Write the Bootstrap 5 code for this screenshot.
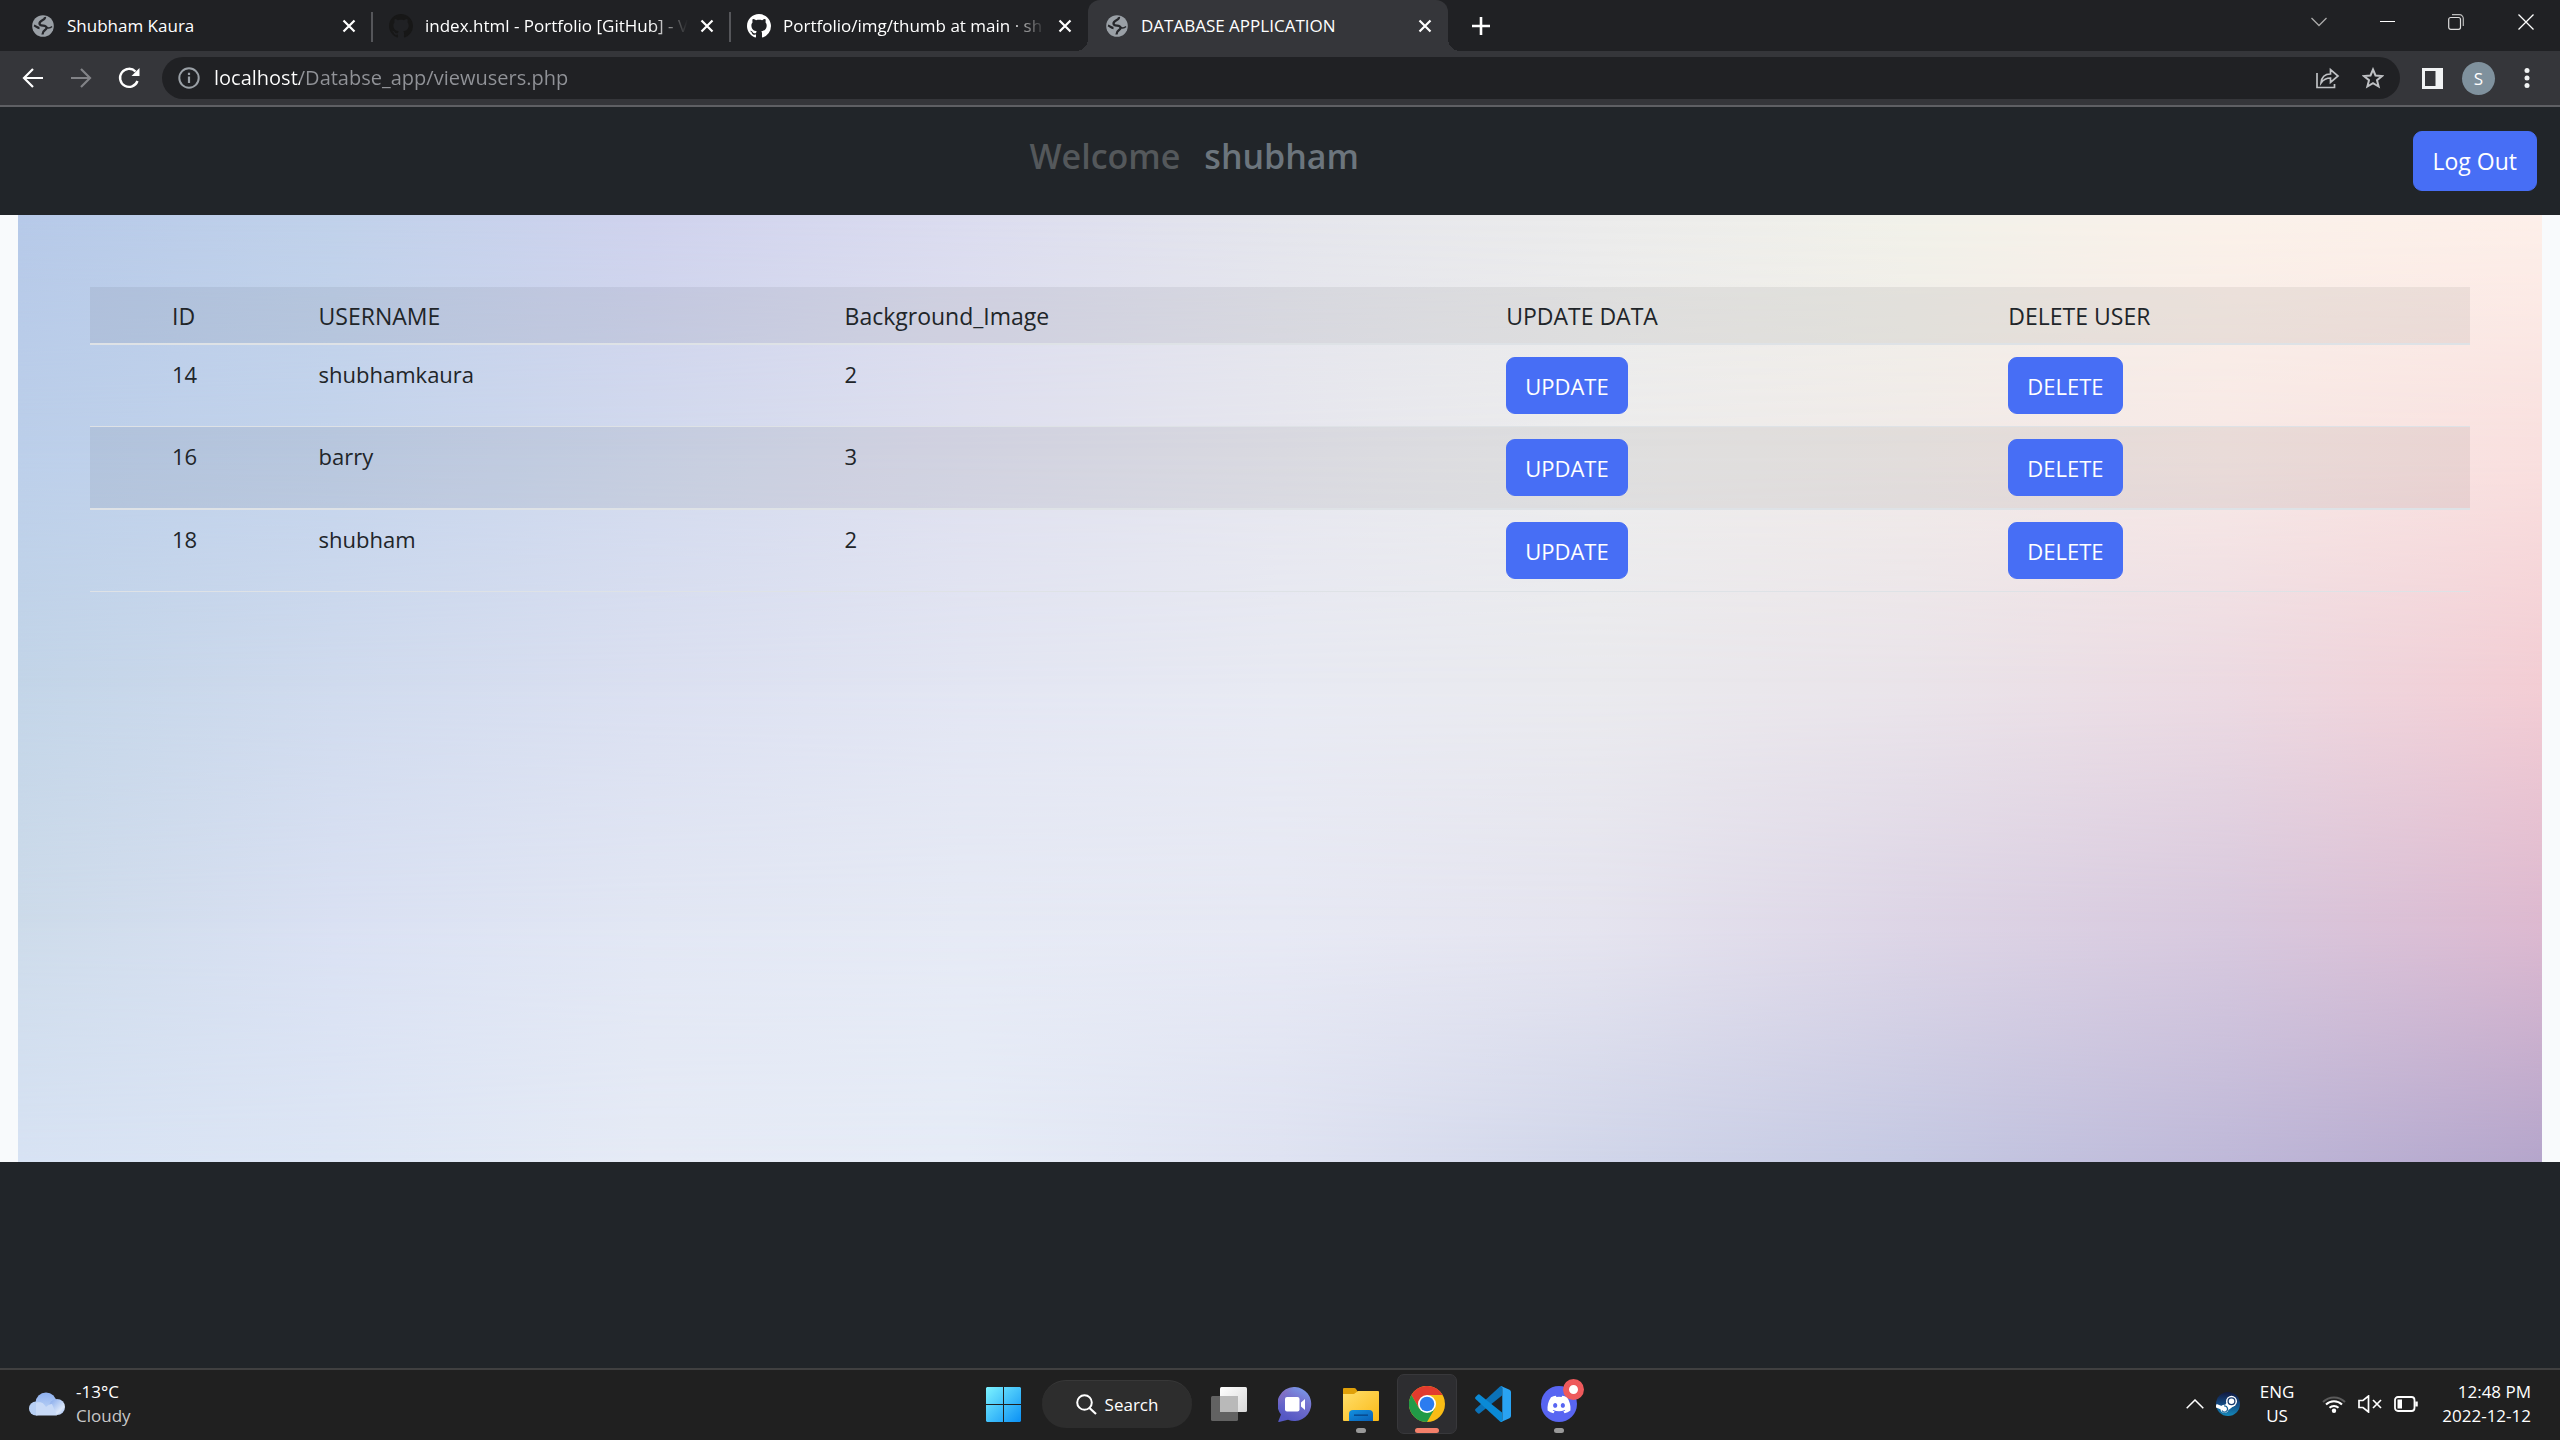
<!DOCTYPE html>
<html lang="en">
<head>
<meta charset="utf-8">
<meta name="viewport" content="width=device-width, initial-scale=1">
<title>DATABASE APPLICATION</title>
<link href="https://cdn.jsdelivr.net/npm/bootstrap@5.3.0/dist/css/bootstrap.min.css" rel="stylesheet">
<style>
  body { font-family: "Open Sans", "Noto Sans", sans-serif; background: #f8fafc; color: #212529; }
  svg { display: block; flex: none; }
  button { border: 0; background: none; color: inherit; padding: 0; }

  /* browser tabs */
  .tabstrip { background: #202124; color: #fff; height: 51px; padding-left: 14px; font-size: 17px; }
  .tab { width: 358px; padding: 0 16px 0 17px; gap: 12px; position: relative; }
  .tab a { color: inherit; text-decoration: none; min-width: 0; white-space: nowrap; }
  .tab a.long { -webkit-mask-image: linear-gradient(90deg, #000 86%, transparent); mask-image: linear-gradient(90deg, #000 86%, transparent); }
  .tab.divided::after { content: ""; position: absolute; right: -1px; top: 12px; width: 2px; height: 30px; background: #55565a; }
  .tab.current { width: 360px; background: #35363a; border-radius: 12px 12px 0 0; }
  .tab.current::before, .tab.current::after { content: ""; position: absolute; bottom: 0; width: 12px; height: 12px; }
  .tab.current::before { left: -12px; background: radial-gradient(circle at 0 0, transparent 12px, #35363a 12px); }
  .tab.current::after { right: -12px; background: radial-gradient(circle at 100% 0, transparent 12px, #35363a 12px); }
  .window-btns { gap: 45px; padding-right: 25px; height: 43px; }

  /* toolbar */
  .toolbar { background: #35363a; height: 56px; border-bottom: 2px solid #5f6064; padding: 0 24px 0 20px; }
  .nav-btns { gap: 22px; width: 142px; }
  .omnibox { background: #202124; height: 42px; border-radius: 21px; padding: 0 16px; gap: 14px; }
  .omnibox input { border: 0; outline: 0; padding: 0; font-size: 20px; line-height: 30px; color: transparent;
    background: linear-gradient(90deg, #fff 86px, #919398 86px); -webkit-background-clip: text; background-clip: text; }
  .tools { gap: 19px; padding-left: 22px; }
  .avatar { width: 33px; height: 33px; background: #7f919d; color: #fff; font-size: 17px; line-height: 33px; }

  /* application */
  .app-head { background: #212529; padding: 24px 23px 24px 24px; }
  .app-head h1 { font-size: 34px; line-height: 50px; font-weight: 600; color: #54585b; margin: 0 48px 0 0; gap: 24px; }
  .app-head h1 span + span { color: #6c757d; }
  .btn-app { --bs-btn-color: #fff; --bs-btn-bg: #476ef5; --bs-btn-border-color: #476ef5; --bs-btn-hover-color: #fff; --bs-btn-hover-bg: #3a60e6;
    --bs-btn-border-radius: 9px; --bs-btn-font-size: 22px; --bs-btn-line-height: 37px; padding: 10px 18px 8px; }
  .btn-logout { --bs-btn-line-height: 40px; --bs-btn-font-size: 23px; padding: 9px 19px; }
  .wallpaper { margin: 0 18px; padding: 72px; position: relative; }
  .wallpaper > svg { position: absolute; inset: 0; width: 100%; height: 100%; }
  .users { position: relative; --bs-table-bg: transparent; --bs-table-color: #212529; table-layout: fixed; border-collapse: separate; border-spacing: 0; font-size: 22px; line-height: 34px; margin: 0; }
  .users > :not(caption) > * > * { padding: 12px; border-bottom: 1px solid #dee2e6; box-shadow: none; background: none; font-weight: 400; vertical-align: top; }
  .users > thead { font-size: 23px; }
  .users > thead > tr > * { padding-bottom: 10px; border-bottom-width: 2px; }
  .users > tbody > tr:nth-child(even) > * { border-bottom-width: 2px; }
  .users > thead > tr, .users > tbody > tr:nth-child(even) { background: rgba(0, 0, 0, .06); }
  .users > :not(caption) > * > :first-child { padding-left: 82px; }
  .app-foot { background: #212529; height: 206px; }

  /* taskbar */
  .taskbar { background: #202020; border-top: 2px solid #404040; height: 72px; padding-bottom: 2px; color: #fff; font-size: 17px; line-height: 24px; }
  .taskbar > * { flex: 1 1 0; }
  .taskbar > .pinned { flex: none; padding-left: 2px; }
  .slot { width: 66px; height: 70px; position: relative; display: grid; place-items: center; }
  .slot.running::after { content: ""; position: absolute; bottom: 6px; left: 50%; margin-left: -5px; width: 10px; height: 5px; border-radius: 3px; background: #999; }
  .slot.active::before { content: ""; position: absolute; inset: 5px 3px; background: #2d2d30; border: 1px solid #38383b; border-radius: 7px; }
  .slot.active::after { width: 24px; margin-left: -12px; background: #f4806a; }
  .slot svg { position: relative; }
  .slot .ping { position: absolute; top: 10px; right: 8px; width: 21px; height: 21px; border: 6px solid #ee5a5c; background: #fff; border-radius: 50%; }
  .find { width: 150px; height: 48px; margin: 0 4px 0 6px; border-radius: 24px; background: #2d2d2d; border-top: 1px solid #383838; gap: 8px; }
  .weather { padding-left: 29px; gap: 11px; }
  .weather .sky { color: #c8c8c8; }
  .tray { padding-right: 29px; gap: 12px; }
  .clock { padding-left: 12px; }
</style>
<script src="https://cdn.jsdelivr.net/npm/bootstrap@5.3.0/dist/js/bootstrap.bundle.min.js"></script>
</head>
<body class="d-flex flex-column min-vh-100">

<svg width="0" height="0" class="position-absolute" aria-hidden="true">
  <symbol id="globe" viewBox="-1 -1 24 24"><circle cx="11" cy="11" r="10.800" fill="#9aa0a6"/><path d="M13 2C13.500 5.500 7.500 5 7.500 8.500S14 9.500 14.500 12.500 10.500 14.500 10.500 19.500M2 10.500C4 11 5 13 7.500 13" fill="none" stroke="#26272b" stroke-width="2.300"/><path d="M14.500 12.500c2 1 4 .5 5.500-1" fill="none" stroke="#26272b" stroke-width="1.500"/></symbol>
  <symbol id="github" viewBox="0 0 16 16"><path fill="currentColor" d="M8 0C3.580 0 0 3.580 0 8c0 3.540 2.290 6.530 5.470 7.590.4.070.55-.17.55-.38 0-.19-.01-.82-.01-1.490-2.010.37-2.530-.49-2.690-.94-.09-.23-.48-.94-.82-1.130-.28-.15-.68-.52-.01-.53.630-.01 1.080.58 1.230.82.72 1.210 1.870.87 2.330.66.070-.52.280-.87.510-1.070-1.780-.2-3.640-.89-3.640-3.950 0-.87.310-1.590.82-2.150-.08-.2-.36-1.020.08-2.120 0 0 .67-.21 2.200.82.640-.18 1.320-.27 2-.27s1.360.09 2 .27c1.530-1.040 2.200-.82 2.200-.82.440 1.100.160 1.920.080 2.120.510.560.820 1.270.820 2.150 0 3.070-1.870 3.750-3.650 3.950.290.250.540.730.540 1.480 0 1.070-.01 1.930-.01 2.200 0 .21.150.46.550.38A8.010 8.010 0 0 0 16 8c0-4.420-3.580-8-8-8"/></symbol>
  <symbol id="cross" viewBox="0 0 14 14"><path d="M1.500 1.500l11 11M12.500 1.500l-11 11" stroke="#fff" stroke-width="2.200"/></symbol>
</svg>

<nav class="tabstrip d-flex" aria-label="Tabs">
  <div class="tab divided d-flex align-items-center"><svg width="24" height="24"><use href="#globe"/></svg><a href="#" class="flex-grow-1">Shubham Kaura</a><button aria-label="Close tab"><svg width="14" height="14"><use href="#cross"/></svg></button></div>
  <div class="tab divided d-flex align-items-center"><svg width="24" height="24" color="#171717"><use href="#github"/></svg><a href="#" class="long flex-grow-1">index.html - Portfolio [GitHub] - V</a><button aria-label="Close tab"><svg width="14" height="14"><use href="#cross"/></svg></button></div>
  <div class="tab d-flex align-items-center"><svg width="24" height="24" color="#fff"><use href="#github"/></svg><a href="#" class="long flex-grow-1">Portfolio/img/thumb at main · sh</a><button aria-label="Close tab"><svg width="14" height="14"><use href="#cross"/></svg></button></div>
  <div class="tab current d-flex align-items-center"><svg width="24" height="24"><use href="#globe"/></svg><a href="#" class="flex-grow-1">DATABASE APPLICATION</a><button aria-label="Close tab"><svg width="14" height="14"><use href="#cross"/></svg></button></div>
  <button class="ms-4" aria-label="New tab"><svg width="18" height="18" viewBox="0 0 18 18"><path d="M9 0v18M0 9h18" stroke="#fff" stroke-width="2.600"/></svg></button>
  <div class="window-btns d-flex align-items-center ms-auto">
    <button aria-label="Search tabs" class="me-2"><svg width="16" height="10" viewBox="0 0 16 10"><path d="M.5 1L8 8.500 15.500 1" fill="none" stroke="#aaa" stroke-width="1.300"/></svg></button>
    <button aria-label="Minimize" class="me-2"><svg width="15" height="15" viewBox="0 0 15 15"><path d="M0 7.500h15" stroke="#fff"/></svg></button>
    <button aria-label="Restore" class="me-2"><svg width="16" height="16" viewBox="0 0 16 16"><path d="M4 .7h7.500a3.800 3.800 0 0 1 3.800 3.800V12" fill="none" stroke="#bbb" stroke-width="1.200"/><rect x=".7" y="3.500" width="11.800" height="11.800" rx="2" fill="none" stroke="#ddd" stroke-width="1.200"/></svg></button>
    <button aria-label="Close"><svg width="18" height="18" viewBox="0 0 18 18"><path d="M1.500 1.500l15 15M16.500 1.500l-15 15" stroke="#fff" stroke-width="1.300"/></svg></button>
  </div>
</nav>

<div class="toolbar d-flex align-items-center">
  <div class="nav-btns d-flex">
    <button aria-label="Back"><svg width="26" height="22" viewBox="0 0 26 22"><path d="M23 11H5M13 2L4 11l9 9" fill="none" stroke="#fff" stroke-width="2.200"/></svg></button>
    <button aria-label="Forward"><svg width="26" height="22" viewBox="0 0 26 22"><path d="M3 11h18M13 2l9 9-9 9" fill="none" stroke="#828387" stroke-width="2.200"/></svg></button>
    <button aria-label="Reload"><svg width="26" height="22" viewBox="0 0 26 22"><path d="M21.500 14A9 9 0 1 1 19.500 4.500" fill="none" stroke="#fff" stroke-width="2.400"/><path d="M23.500 1v8h-8z" fill="#fff"/></svg></button>
  </div>
  <div class="omnibox d-flex align-items-center flex-grow-1">
    <svg width="22" height="22" viewBox="0 0 22 22"><circle cx="11" cy="11" r="9.700" fill="none" stroke="#9aa0a6" stroke-width="2"/><path d="M11 9.500v6.500M11 5.800v2.200" stroke="#9aa0a6" stroke-width="2.200"/></svg>
    <input type="text" class="flex-grow-1" aria-label="Address" value="localhost/Databse_app/viewusers.php">
    <button aria-label="Share" class="me-2"><svg width="24" height="22" viewBox="0 0 24 22"><path d="M1 6v14.500h17.500V17M5 16c.5-6 4-9 9.500-9V2.500L22 9l-7.500 6.500v-4.500C10 11 7.500 12.500 5 16z" fill="none" stroke="#bfc1c4" stroke-width="1.700"/></svg></button>
    <button aria-label="Bookmark"><svg width="22" height="22" viewBox="0 0 22 22"><path d="M11 2.500l2.500 6 6.500.5-5 4.200 1.600 6.300-5.600-3.400-5.600 3.400L7 13.200 2 9l6.500-.5z" fill="none" stroke="#bfc1c4" stroke-width="2"/></svg></button>
  </div>
  <div class="tools d-flex align-items-center">
    <button aria-label="Side panel"><svg width="21" height="21" viewBox="0 0 21 21"><path d="M0 0h21v21H0zM3 3v15h10.500V3z" fill="#f1f3f4" fill-rule="evenodd"/></svg></button>
    <button class="avatar rounded-circle text-center">S</button>
    <button aria-label="Menu" class="ps-1"><svg width="18" height="20" viewBox="0 0 18 20"><g fill="#f1f3f4"><circle cx="9" cy="2.500" r="2.500"/><circle cx="9" cy="10" r="2.500"/><circle cx="9" cy="17.500" r="2.500"/></g></svg></button>
  </div>
</div>

<header class="app-head d-flex align-items-start">
  <h1 class="d-flex justify-content-center flex-grow-1"><span>Welcome</span><span>shubham</span></h1>
  <button class="btn btn-app btn-logout">Log Out</button>
</header>

<main class="wallpaper flex-grow-1">
  <svg viewBox="0 0 100 100" preserveAspectRatio="none" aria-hidden="true">
    <defs>
      <linearGradient id="r0"><stop offset="0" stop-color="#b6c9e8"/><stop offset=".125" stop-color="#c0d1ea"/><stop offset=".25" stop-color="#cfd2ed"/><stop offset=".375" stop-color="#dbdcef"/><stop offset=".5" stop-color="#e4e5ec"/><stop offset=".625" stop-color="#ebebeb"/><stop offset=".75" stop-color="#f1f1e9"/><stop offset=".875" stop-color="#faf1e9"/><stop offset="1" stop-color="#fdefe9"/></linearGradient>
      <linearGradient id="r1"><stop offset="0" stop-color="#bccfea"/><stop offset=".125" stop-color="#c4d4ec"/><stop offset=".25" stop-color="#d2daee"/><stop offset=".375" stop-color="#dfe0ef"/><stop offset=".5" stop-color="#e7e7ef"/><stop offset=".625" stop-color="#ededed"/><stop offset=".75" stop-color="#f1ebe9"/><stop offset=".875" stop-color="#f8e9e6"/><stop offset="1" stop-color="#f9e0df"/></linearGradient>
      <linearGradient id="r2"><stop offset="0" stop-color="#c3d5e8"/><stop offset=".125" stop-color="#d0dbee"/><stop offset=".25" stop-color="#dbe0f1"/><stop offset=".375" stop-color="#e3e6f3"/><stop offset=".5" stop-color="#e8eaf3"/><stop offset=".625" stop-color="#eaeaee"/><stop offset=".75" stop-color="#eae4ea"/><stop offset=".875" stop-color="#ecdae2"/><stop offset="1" stop-color="#f3cdd4"/></linearGradient>
      <linearGradient id="r3"><stop offset="0" stop-color="#cddbea"/><stop offset=".125" stop-color="#dae1f3"/><stop offset=".25" stop-color="#e2e7f4"/><stop offset=".375" stop-color="#e6eaf5"/><stop offset=".5" stop-color="#e7e9f4"/><stop offset=".625" stop-color="#e5e4ef"/><stop offset=".75" stop-color="#ddd5e6"/><stop offset=".875" stop-color="#d8c9de"/><stop offset="1" stop-color="#ddb9d0"/></linearGradient>
      <linearGradient id="r4"><stop offset="0" stop-color="#d8e3f4"/><stop offset=".125" stop-color="#dde6f5"/><stop offset=".25" stop-color="#e6ebf6"/><stop offset=".375" stop-color="#e6ecf7"/><stop offset=".5" stop-color="#dfe3f2"/><stop offset=".625" stop-color="#d1d6ea"/><stop offset=".75" stop-color="#c5c9e3"/><stop offset=".875" stop-color="#bfb9d9"/><stop offset="1" stop-color="#b5a6cc"/></linearGradient>
      <linearGradient id="f0" x2="0" y2="1"><stop offset="0" stop-color="#fff"/><stop offset=".25" stop-color="#000"/></linearGradient>
      <linearGradient id="f1" x2="0" y2="1"><stop offset=".25" stop-color="#fff"/><stop offset=".5" stop-color="#000"/></linearGradient>
      <linearGradient id="f2" x2="0" y2="1"><stop offset=".5" stop-color="#fff"/><stop offset=".75" stop-color="#000"/></linearGradient>
      <linearGradient id="f3" x2="0" y2="1"><stop offset=".75" stop-color="#fff"/><stop offset="1" stop-color="#000"/></linearGradient>
      <mask id="m0"><rect width="100" height="100" fill="url(#f0)"/></mask>
      <mask id="m1"><rect width="100" height="100" fill="url(#f1)"/></mask>
      <mask id="m2"><rect width="100" height="100" fill="url(#f2)"/></mask>
      <mask id="m3"><rect width="100" height="100" fill="url(#f3)"/></mask>
    </defs>
    <rect width="100" height="100" fill="url(#r4)"/>
    <rect width="100" height="100" fill="url(#r3)" mask="url(#m3)"/>
    <rect width="100" height="100" fill="url(#r2)" mask="url(#m2)"/>
    <rect width="100" height="100" fill="url(#r1)" mask="url(#m1)"/>
    <rect width="100" height="100" fill="url(#r0)" mask="url(#m0)"/>
  </svg>
  <table class="table users">
    <colgroup><col style="width:9.1%"><col style="width:22.1%"><col style="width:27.8%"><col style="width:21.1%"><col></colgroup>
    <thead><tr><th>ID</th><th>USERNAME</th><th>Background_Image</th><th>UPDATE DATA</th><th>DELETE USER</th></tr></thead>
    <tbody>
      <tr><td>14</td><td>shubhamkaura</td><td>2</td><td><button class="btn btn-app">UPDATE</button></td><td><button class="btn btn-app">DELETE</button></td></tr>
      <tr><td>16</td><td>barry</td><td>3</td><td><button class="btn btn-app">UPDATE</button></td><td><button class="btn btn-app">DELETE</button></td></tr>
      <tr><td>18</td><td>shubham</td><td>2</td><td><button class="btn btn-app">UPDATE</button></td><td><button class="btn btn-app">DELETE</button></td></tr>
    </tbody>
  </table>
</main>
<footer class="app-foot"></footer>

<div class="taskbar d-flex align-items-center">
  <div class="weather d-flex align-items-center">
    <svg width="36" height="24" viewBox="0 0 36 24"><defs><linearGradient id="cl" x2="0" y2="1"><stop offset="0" stop-color="#8fb1f0"/><stop offset="1" stop-color="#c3d8f6"/></linearGradient><linearGradient id="cl2" x2="1" y2="1"><stop offset="0" stop-color="#7ea4ea"/><stop offset=".7" stop-color="#dce8fa"/><stop offset="1" stop-color="#8fb0ee"/></linearGradient></defs><circle cx="17" cy="11" r="10.500" fill="url(#cl)"/><circle cx="28" cy="15" r="8" fill="url(#cl2)"/><circle cx="7" cy="16.500" r="7" fill="#b7cff4"/><path d="M7 11c6-2 8 1 10 4 2-2 4-3 6-3l5 11.500H7z" fill="#c8daf7"/></svg>
    <div><div>-13°C</div><div class="sky">Cloudy</div></div>
  </div>
  <div class="pinned d-flex align-items-center">
    <button class="slot" aria-label="Start"><svg width="35" height="35" viewBox="0 0 35 35"><defs><linearGradient id="win" x2="1" y2="1"><stop offset="0" stop-color="#7df3ff"/><stop offset="1" stop-color="#0a90f5"/></linearGradient></defs><path d="M1 0h16v17H0V1zM18 0h16l1 1v16H18zM0 18h17v17H1l-1-1zM18 18h17v16l-1 1H18z" fill="url(#win)"/></svg></button>
    <button class="find d-flex align-items-center justify-content-center"><svg width="21" height="21" viewBox="0 0 21 21"><circle cx="8.500" cy="8.500" r="7.300" fill="none" stroke="#fff" stroke-width="2"/><path d="M13.500 14l6.500 6" stroke="#fff" stroke-width="2.200"/></svg>Search</button>
    <button class="slot" aria-label="Task view"><svg width="36" height="34" viewBox="0 0 36 34"><defs><linearGradient id="tv" x2="1" y2="1"><stop offset="0" stop-color="#fff"/><stop offset="1" stop-color="#d8d8d8"/></linearGradient></defs><rect x="0" y="9" width="27" height="25" rx="1.500" fill="#626262"/><rect x="9" y="0" width="27" height="25" rx="1.500" fill="url(#tv)"/><path d="M9 9h18v16H9z" fill="#b9b9b9"/></svg></button>
    <button class="slot" aria-label="Chat"><svg width="34" height="35" viewBox="0 0 34 35"><defs><linearGradient id="ch" x1="1" y1="0" x2=".5" y2="1"><stop offset="0" stop-color="#7aa5f0"/><stop offset=".45" stop-color="#7673cf"/><stop offset="1" stop-color="#5558c4"/></linearGradient><linearGradient id="ch2" x2=".6" y2=".5"><stop offset="0" stop-color="#a268a8"/><stop offset="1" stop-color="#a268a8" stop-opacity="0"/></linearGradient></defs><path d="M17 0a17 17 0 1 1-7 32.800L1 35q-1 0-.6-1L3 27.500A17 17 0 0 1 17 0z" fill="url(#ch)"/><path d="M17 0A17 17 0 0 0 0 18h17z" fill="url(#ch2)" opacity=".7"/><rect x="7" y="10" width="14.500" height="14.500" rx="2" fill="#fff"/><path d="M23 15.500l4-3.500v11l-4-3.500z" fill="#fff"/></svg></button>
    <button class="slot running" aria-label="File Explorer"><svg width="36" height="34" viewBox="0 0 36 34"><defs><linearGradient id="fo" x2="1" y2="1"><stop offset="0" stop-color="#ffdf6b"/><stop offset="1" stop-color="#fbb917"/></linearGradient><linearGradient id="fb" x2="1" y2="1"><stop offset="0" stop-color="#1291e0"/><stop offset="1" stop-color="#0a5fb5"/></linearGradient></defs><path d="M0 6V2q0-1 1-1h10q1.500 0 2 1l2 3v6H0z" fill="#e0a009"/><path d="M0 7h11l4-3h20q1 0 1 1v28q0 1-1 1H1q-1 0-1-1z" fill="url(#fo)"/><path d="M6 34v-7q0-4 4-4h16q4 0 4 4v7z" fill="url(#fb)"/><path d="M11 28.200h14" stroke="#084c91" stroke-width="1.600"/></svg></button>
    <button class="slot running active" aria-label="Chrome"><svg width="36" height="36" viewBox="0 0 36 36"><circle cx="18" cy="18" r="18" fill="#f9bc15"/><path d="M18 18L18 9h15.600A18 18 0 0 0 2.400 9l7.800 13.500z" fill="#e33b2e"/><path d="M2.400 9A18 18 0 0 0 18 36l7.800-13.500H10.200z" fill="#219a47"/><circle cx="18" cy="18" r="9" fill="#fff"/><circle cx="18" cy="18" r="7.300" fill="#2b7cf0"/></svg></button>
    <button class="slot" aria-label="Visual Studio Code"><svg width="36" height="36" viewBox="0 0 36 36"><path d="M27 9.500L4.500 27.500Q3.500 28 2.500 27L.5 25q-.8-1 0-1.900L25 .6q1-.9 2.200-.5z" fill="#0b72b8"/><path d="M27 26.500L4.500 8.500Q3.500 8 2.500 9L.5 11q-.8 1 0 1.900L25 35.400q1 .9 2.200.5z" fill="#0a8ad6"/><path d="M26 0l8.500 3.700q1.500.8 1.500 2.300v24q0 1.500-1.500 2.300L26 36q1.300-.8 1.300-2V2q0-1.200-1.300-2z" fill="#29a3f3"/></svg></button>
    <button class="slot running" aria-label="Discord"><svg width="36" height="36" viewBox="0 0 36 36"><circle cx="18" cy="18" r="18" fill="#5865f2"/><path transform="translate(6.500 7) scale(1.440)" fill="#fff" d="M13.545 2.907a13.200 13.200 0 0 0-3.257-1.011.05.050 0 0 0-.052.025c-.141.250-.297.577-.406.833a12.200 12.200 0 0 0-3.658 0 8 8 0 0 0-.412-.833.050.050 0 0 0-.052-.025c-1.125.194-2.220.534-3.257 1.011a.04.040 0 0 0-.021.018C.356 6.024-.213 9.047.066 12.032q.003.022.021.037a13.300 13.300 0 0 0 3.995 2.020.050.050 0 0 0 .056-.019q.463-.63.818-1.329a.050.050 0 0 0-.010-.059l-.018-.011a9 9 0 0 1-1.248-.595.050.050 0 0 1-.020-.066l.015-.019q.127-.095.248-.195a.050.050 0 0 1 .051-.007c2.619 1.196 5.454 1.196 8.041 0a.050.050 0 0 1 .053.007q.121.100.248.195a.050.050 0 0 1-.004.085 8 8 0 0 1-1.249.594.050.050 0 0 0-.030.030.050.050 0 0 0 .003.041c.240.465.515.909.817 1.329a.050.050 0 0 0 .056.019 13.200 13.200 0 0 0 4.001-2.020.050.050 0 0 0 .021-.037c.334-3.451-.559-6.449-2.366-9.106a.030.030 0 0 0-.020-.019m-8.198 7.307c-.789 0-1.438-.724-1.438-1.612s.637-1.613 1.438-1.613c.807 0 1.450.730 1.438 1.613 0 .888-.637 1.612-1.438 1.612m5.316 0c-.788 0-1.438-.724-1.438-1.612s.637-1.613 1.438-1.613c.807 0 1.451.730 1.438 1.613 0 .888-.631 1.612-1.438 1.612"/></svg><span class="ping"></span></button>
  </div>
  <div class="tray d-flex align-items-center justify-content-end">
    <button aria-label="Hidden icons"><svg width="18" height="10" viewBox="0 0 18 10"><path d="M.7 9.300L9 1l8.300 8.300" fill="none" stroke="#fff" stroke-width="1.500"/></svg></button>
    <button aria-label="Steam"><svg width="24" height="24" viewBox="0 0 24 24"><defs><linearGradient id="st" x2="0" y2="1"><stop offset="0" stop-color="#12193f"/><stop offset=".5" stop-color="#144a82"/><stop offset="1" stop-color="#1389bb"/></linearGradient></defs><circle cx="12" cy="12" r="12" fill="url(#st)"/><path d="M0 13.500l7 2.900 5-1.900-1-3" stroke="#fff" stroke-width="3.500" fill="none"/><path d="M11 10l-2.500 5 4 3L19 13z" fill="#fff"/><circle cx="15.500" cy="9.300" r="5.500" fill="#fff"/><circle cx="15.500" cy="9.300" r="3.400" fill="none" stroke="#173c70" stroke-width="1.300"/><circle cx="8.500" cy="16.800" r="4" fill="#fff"/><path d="M6 18.500a3 3 0 1 0 2-4.500" fill="none" stroke="#17639a" stroke-width="1.200"/></svg></button>
    <div class="text-center px-2"><div>ENG</div><div>US</div></div>
    <svg class="ms-2" width="24" height="18" viewBox="0 0 24 18"><g fill="none" stroke-width="2"><path d="M1 7a15.500 15.500 0 0 1 22 0" stroke="#5a5a5a"/><path d="M4 9.500a11.300 11.300 0 0 1 16 0M7.500 12.800a6.500 6.500 0 0 1 9 0" stroke="#fff"/></g><circle cx="12" cy="15.700" r="2.200" fill="#fff"/></svg>
    <svg width="24" height="18" viewBox="0 0 24 18"><path d="M1 5.500h4L10.500 1v16L5 12.500H1zM15 5l8 8M23 5l-8 8" fill="none" stroke="#fff" stroke-width="1.700"/></svg>
    <svg width="24" height="16" viewBox="0 0 24 16"><rect x="1" y="1" width="19.500" height="14" rx="3" fill="none" stroke="#fff" stroke-width="1.800"/><rect x="3.500" y="3.500" width="4.500" height="9" fill="#fff"/><path d="M22.500 5.500v5" stroke="#fff" stroke-width="2.500"/></svg>
    <div class="clock text-end"><div>12:48 PM</div><div>2022-12-12</div></div>
  </div>
</div>
</body>
</html>
